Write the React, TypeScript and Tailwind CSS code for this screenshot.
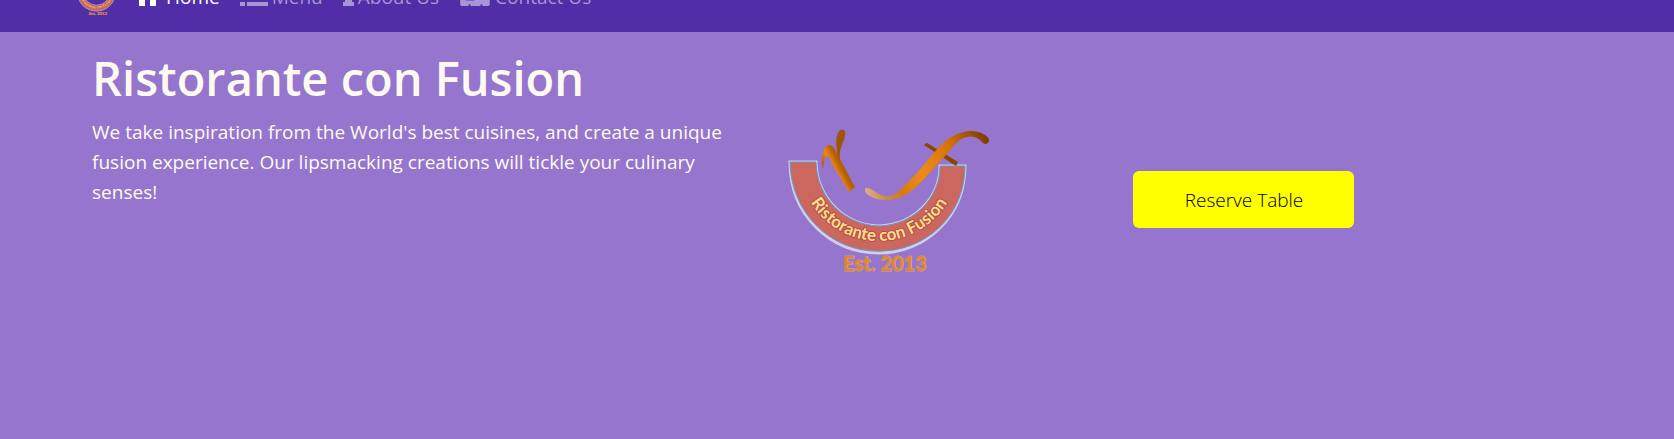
import { useId } from "react";

const links = [
  { label: "Home", href: "#home", width: "w-[21px]", active: true, view: "0 0 21 24", d: "M10.5 3 0 13h2v11h6v-7h5v7h6V13h2z" },
  { label: "Menu", href: "#menu", width: "w-[28px]", active: false, view: "0 0 28 24", d: "M0 4h5v4H0zM7 4h21v4H7zM0 12h5v4H0zM7 12h21v4H7zM0 20h5v4H0zM7 20h21v4H7z" },
  { label: "About Us", href: "#about", width: "w-[11px]", active: false, view: "0 0 11 24", d: "M3 0h5v5H3zM1 8h8v12h2v4H0v-4h2v-8H1z" },
  { label: "Contact Us", href: "#contact", width: "w-[32px]", active: false, view: "0 0 32 26", d: "M2 0h28q2 0 2 2v22q0 2-2 2h-6v-2h-2v2H11v-2H9v2H2q-2 0-2-2V2q0-2 2-2zM4 17q0 3 3 3h7q3 0 3-3 0-4-3-4-4 3-7 0-3 0-3 4zM20 17v2h8v-2z" },
];

function Logo({ className }: { className: string }) {
  const id = useId();
  const arc = `${id}arc`;
  const gold = `${id}gold`;
  const stem = `${id}stem`;
  return (
    <svg viewBox="0 0 220 160" className={className} role="img" aria-label="Ristorante con Fusion">
      <defs>
        <path id={arc} d="M19 41A80 80 0 0 0 179 41" />
        <linearGradient id={gold} x1="84" y1="75" x2="210" y2="20" gradientUnits="userSpaceOnUse">
          <stop offset="0" stopColor="#dcb491" />
          <stop offset=".14" stopColor="#c98a4c" />
          <stop offset=".26" stopColor="#d57a12" />
          <stop offset=".45" stopColor="#ef8b14" />
          <stop offset=".72" stopColor="#d47209" />
          <stop offset=".88" stopColor="#a05003" />
          <stop offset="1" stopColor="#7a3a00" />
        </linearGradient>
        <linearGradient id={stem} x1="50" y1="57" x2="63" y2="50" gradientUnits="userSpaceOnUse">
          <stop offset="0" stopColor="#b46008" />
          <stop offset=".5" stopColor="#ef8a10" />
          <stop offset="1" stopColor="#b46008" />
        </linearGradient>
      </defs>
      <path d="M10 42H36C37 79 65 105 99 106C134 105 160 78 160 46H185C185 97 145 133 99 133C49 133 10 94 10 42Z" fill="#cc675f" stroke="#d2cde8" strokeWidth="3" />
      <path d="M10 42H36C37 79 65 105 99 106C134 105 160 78 160 46H185C185 97 145 131 99 131C50 131 11 93 10 42Z" fill="#cc675f" stroke="#609bc9" strokeWidth="1" />
      <path d="M42 48C41 36 44 25 49 25C53 25 56 31 59 37L75 67L69 72L52 44C50 38 48 34 46 36Q44 40 43 48Z" fill={`url(#${stem})`} />
      <path d="M58 37C55 24 56 11 61 10C66 9 66 14 64 20C61 27 59 31 60 41Z" fill="#a05404" />
      <path d="m144 25 3-2 31 19-2 4Z" fill="#8c4400" />
      <path d="M85 69C86 66 91 69 96 72C102 77 112 78 118 72L137 53L158 28C168 17 179 12 190 11C200 11 210 16 209 21C207 26 203 24 200 20C193 14 184 16 177 22L165 36L141 62C129 74 120 80 106 80C95 80 84 75 85 69Z" fill={`url(#${gold})`} />
      <text fill="#ffdd8b" stroke="#b34e45" strokeWidth="2" strokeLinejoin="round" paintOrder="stroke" fontSize="17" fontWeight="700" fontFamily="Lato, sans-serif" textAnchor="middle">
        <textPath href={`#${arc}`} startOffset="50%">Ristorante con Fusion</textPath>
      </text>
      <text x="105" y="151" fill="#e8871a" stroke="#c4a0a8" strokeWidth="1" paintOrder="stroke" fontSize="20" fontWeight="700" fontFamily="Lato, sans-serif" textAnchor="middle">Est. 2013</text>
    </svg>
  );
}

export default function App() {
  return (
    <div className="min-h-screen bg-[#9575cd] font-['Open_Sans','Noto_Sans',sans-serif] text-[19px] leading-[30px] text-[#fffaf0]">
      <header className="flex h-8 items-end overflow-hidden bg-[#512da8] pl-[75px]">
        <a href="#home" className="shrink-0 pb-[15px]">
          <Logo className="h-[35px] w-12" />
        </a>
        <nav className="flex items-end gap-5 pb-5 pl-[14px]">
          {links.map((link) => (
            <a key={link.label} href={link.href} className={link.active ? "flex items-end gap-2 text-white" : "flex items-end gap-1 text-[#a896d4]"}>
              <svg viewBox={link.view} className={`mb-[6px] h-6 ${link.width}`} fill="currentColor" fillRule="evenodd" aria-hidden="true">
                <path d={link.d} />
              </svg>
              {link.label}
            </a>
          ))}
        </nav>
      </header>
      <main className="grid grid-cols-[minmax(0,46.2%)_minmax(0,23.7%)_minmax(0,1fr)] px-[5.5%] pt-[18px]">
        <section className="pr-10">
          <h1 className="text-[47px] leading-[56px] font-semibold">Ristorante con Fusion</h1>
          <p className="mt-[11px]">We take inspiration from the World's best cuisines, and create a unique fusion experience. Our lipsmacking creations will tickle your culinary senses!</p>
        </section>
        <Logo className="mt-[70px] w-[220px]" />
        <div className="pt-[121px]">
          <button className="h-[57px] w-[221px] rounded-md bg-[#ffff00] font-light text-black">Reserve Table</button>
        </div>
      </main>
    </div>
  );
}
